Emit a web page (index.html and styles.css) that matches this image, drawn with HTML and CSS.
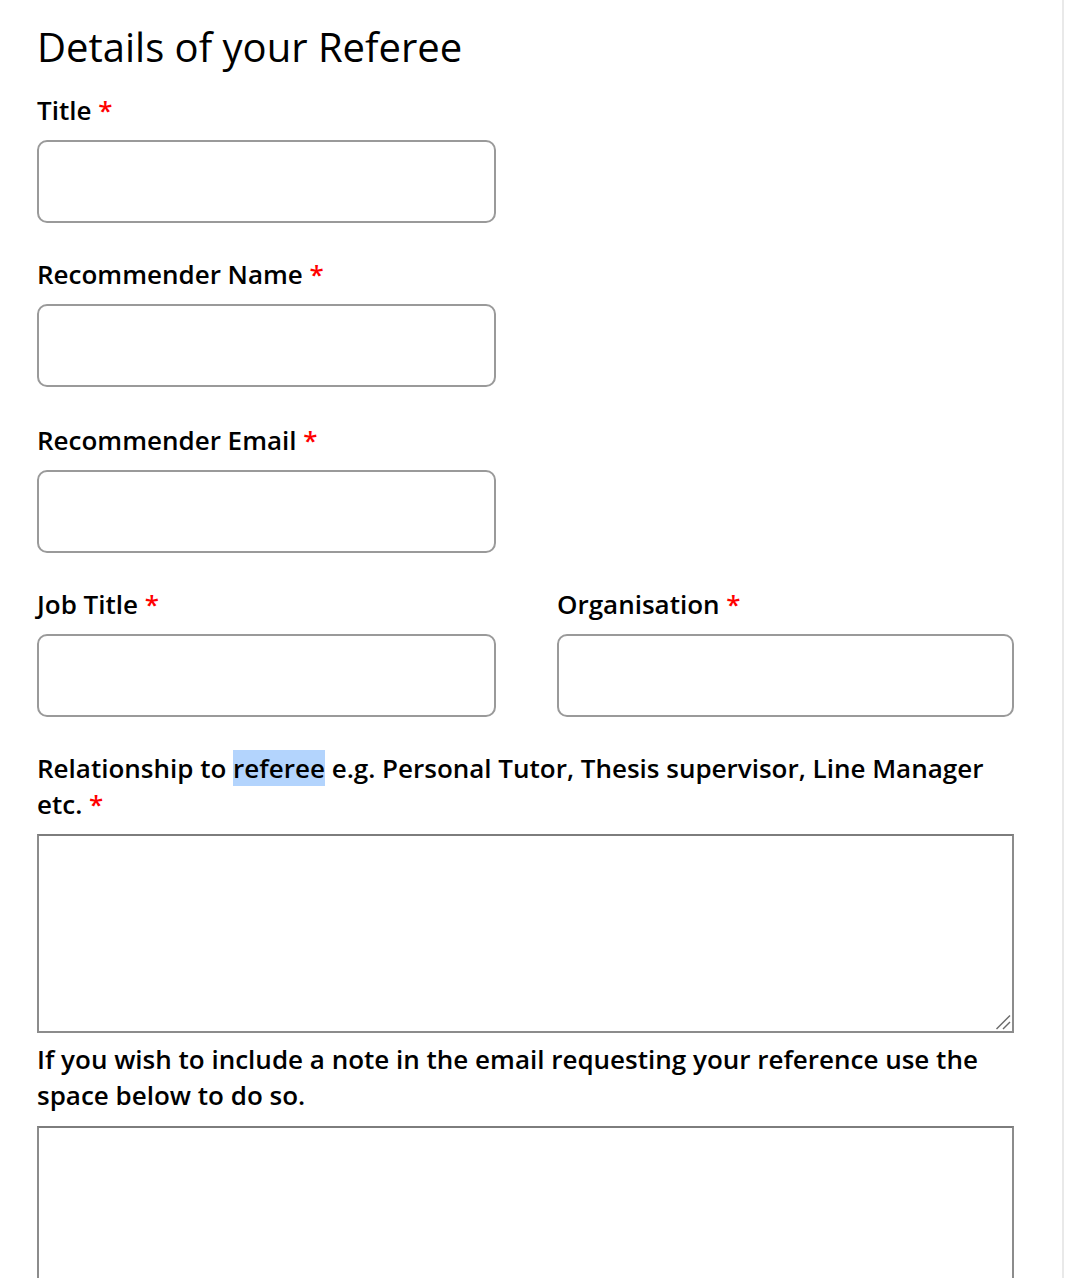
FILE: index.html
```html
<!DOCTYPE html>
<html lang="en">
<head>
<meta charset="utf-8">
<title>Details of your Referee</title>
<link rel="stylesheet" href="styles.css">
</head>
<body>
<div class="page">
  <h1 class="heading">Details of your Referee</h1>
  <form class="form">
    <div class="field">
      <label class="label">Title <span class="req">*</span></label>
      <input class="input" type="text">
    </div>
    <div class="field">
      <label class="label">Recommender Name <span class="req">*</span></label>
      <input class="input" type="text">
    </div>
    <div class="field field-email">
      <label class="label">Recommender Email <span class="req">*</span></label>
      <input class="input" type="text">
    </div>
    <div class="row">
      <div class="field">
        <label class="label label-job">Job Title <span class="req">*</span></label>
        <input class="input" type="text">
      </div>
      <div class="field">
        <label class="label">Organisation <span class="req">*</span></label>
        <input class="input input-org" type="text">
      </div>
    </div>
    <div class="field field-area">
      <label class="label">Relationship to <span class="sel">referee</span> e.g. Personal Tutor, Thesis supervisor, Line Manager etc. <span class="req">*</span></label>
      <div class="area-wrap">
        <textarea class="area"></textarea>
        <svg class="grip" width="16" height="16" viewBox="0 0 16 16" aria-hidden="true">
          <line x1="1.5" y1="15" x2="15" y2="1.5" stroke="#6a6a6a" stroke-width="1.4"/>
          <line x1="8" y1="15" x2="15" y2="8" stroke="#6a6a6a" stroke-width="1.4"/>
        </svg>
      </div>
    </div>
    <div class="field field-area2">
      <label class="label label-note">If you wish to include a note in the email requesting your reference use the space below to do so.</label>
      <div class="area-wrap">
        <textarea class="area area-tall"></textarea>
      </div>
    </div>
  </form>
</div>
</body>
</html>
```

FILE: styles.css
```css
html, body {
  margin: 0;
  padding: 0;
  background: #fff;
}
body {
  height: 1278px;
  overflow: hidden;
}
.page {
  width: 1064px;
  height: 1278px;
  box-sizing: border-box;
  border-right: 2px solid #e9e9e9;
  padding: 21px 0 0 37px;
  font-family: "Open Sans", "Liberation Sans", sans-serif;
  color: #000;
}
.heading {
  margin: 0;
  font-family: "Open Sans", "Liberation Sans", sans-serif;
  font-weight: 400;
  font-size: 40px;
  line-height: 52px;
  height: 71px;
}
.form {
  display: flex;
  flex-direction: column;
  width: 977px;
}
.field {
  display: flex;
  flex-direction: column;
  margin-bottom: 33px;
}
.field-email {
  margin-top: 2px;
}
.label {
  font-weight: 600;
  font-size: 26px;
  line-height: 36px;
  margin-bottom: 12px;
}
.label-note {
  margin-bottom: 13px;
}
.req {
  color: #ff0000;
}
.sel {
  background: #b3d4fd;
}
.input {
  width: 459px;
  height: 83px;
  box-sizing: border-box;
  border: 2px solid #9a9a9a;
  border-radius: 10px;
  margin: 0;
  padding: 0 12px;
  outline: none;
  background: #fff;
}
.input-org {
  width: 457px;
}
.row {
  display: flex;
  gap: 61px;
}
.area-wrap {
  position: relative;
  width: 977px;
}
.area {
  display: block;
  width: 977px;
  height: 199px;
  box-sizing: border-box;
  border: 2px solid #8c8c8c;
  border-top-color: #7d7d7d;
  border-radius: 0;
  margin: 0;
  padding: 8px;
  resize: none;
  outline: none;
  background: #fff;
  font-family: inherit;
}
.area-tall {
  height: 300px;
}
.grip {
  position: absolute;
  right: 3px;
  bottom: 3px;
}
.field-area {
  margin-bottom: 8px;
}
```
